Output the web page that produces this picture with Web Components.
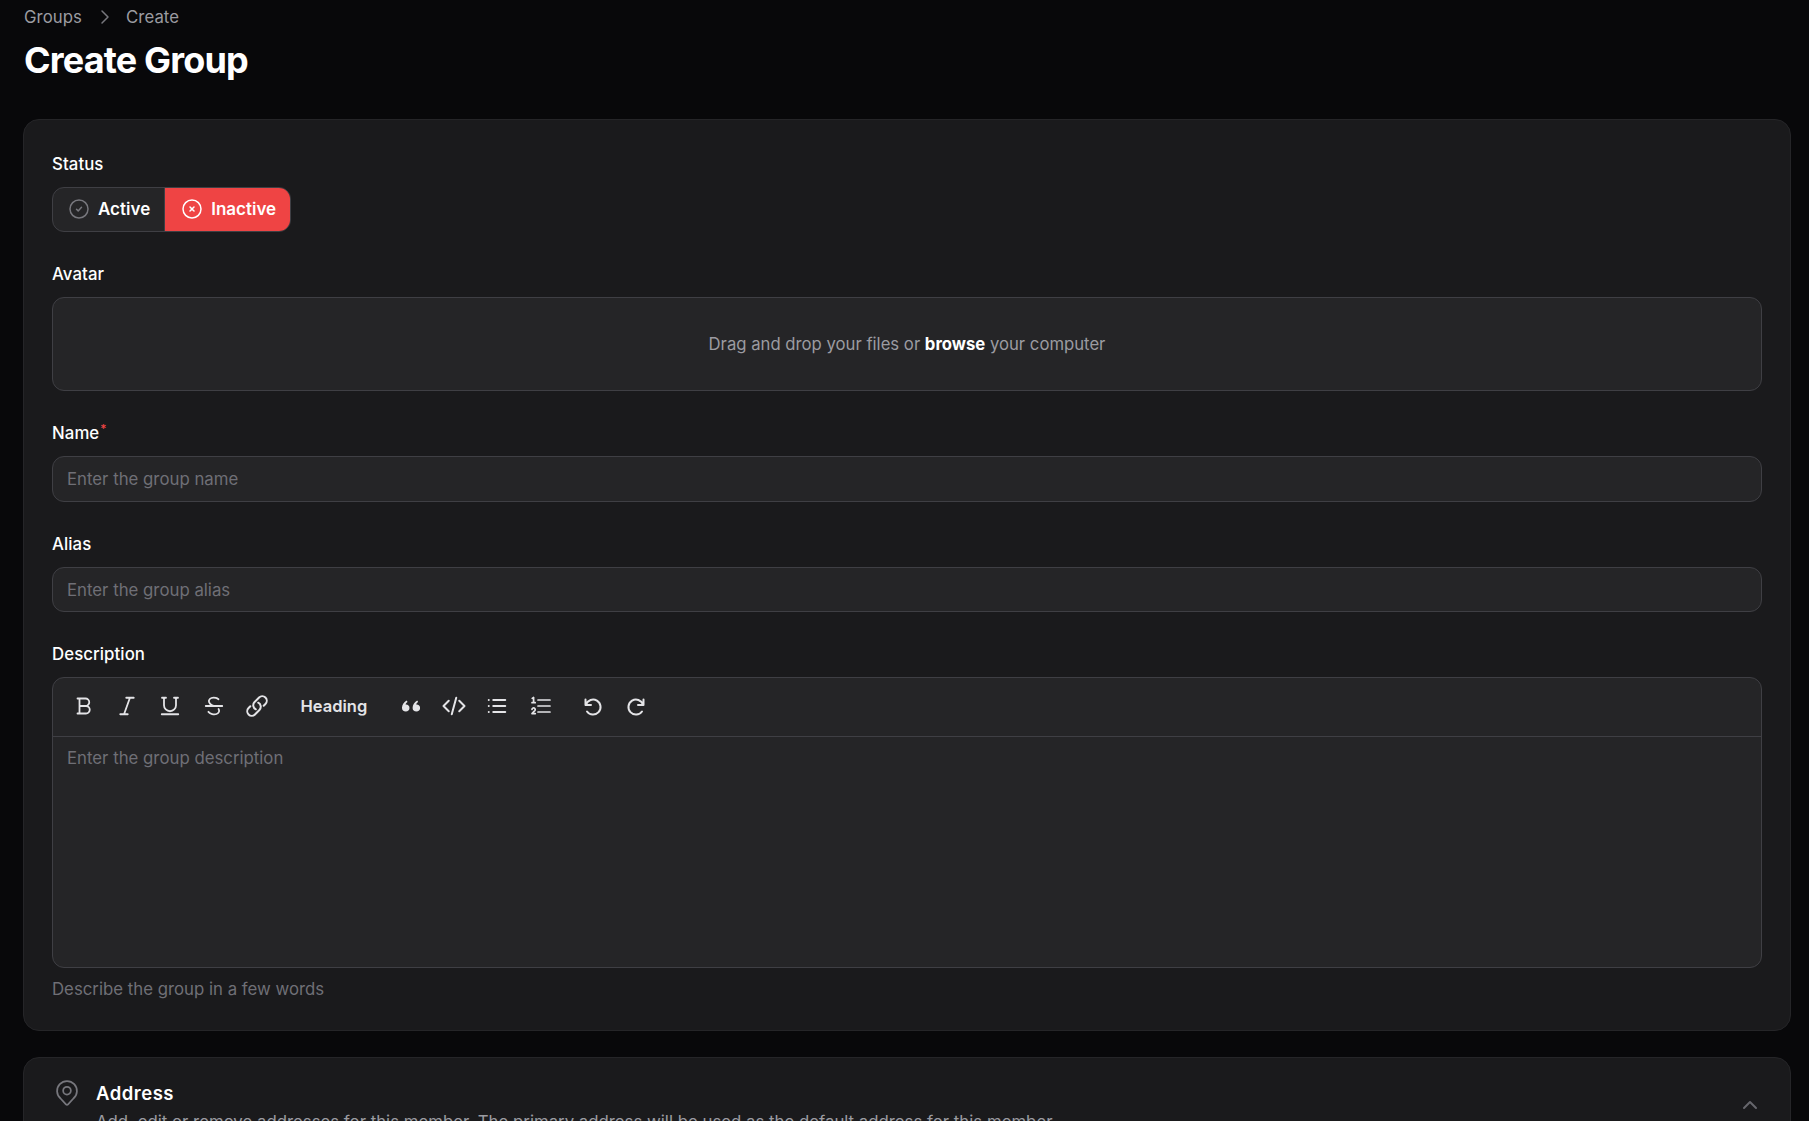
<!doctype html>
<html lang="en">
<head>
<meta charset="utf-8">
<title>Create Group</title>
<style>
  html, body { margin: 0; height: 100%; overflow: hidden; background: #08080a; }
  body { font-family: Inter, "Liberation Sans", sans-serif; color: #fff; }
  .stack { display: flex; flex-direction: column; gap: 26px; padding: 0 18px 0 23px; }
</style>
</head>
<body>
<page-header crumb="Groups" current="Create" title="Create Group"></page-header>
<div class="stack">
  <form-card>
    <form-field label="Status">
      <status-toggle></status-toggle>
    </form-field>
    <form-field label="Avatar">
      <drop-zone></drop-zone>
    </form-field>
    <form-field label="Name" required>
      <text-input placeholder="Enter the group name"></text-input>
    </form-field>
    <form-field label="Alias">
      <text-input placeholder="Enter the group alias" style="height: 45px"></text-input>
    </form-field>
    <form-field label="Description" help="Describe the group in a few words">
      <rich-editor placeholder="Enter the group description"></rich-editor>
    </form-field>
  </form-card>
  <section-card heading="Address" text="Add, edit or remove addresses for this member. The primary address will be used as the default address for this member."></section-card>
</div>

<script>
// small helper, every component has the same shadow setup
const shadow = (el, html) => {
  el.attachShadow({ mode: 'open' }).innerHTML = html;
};

const icon = (d, size = 24, width = 1.5) => /* html */ `
  <svg width="${size}" height="${size}" viewBox="0 0 24 24" fill="none" stroke="currentColor"
    stroke-width="${width}" stroke-linecap="round" stroke-linejoin="round"><path d="${d}"/></svg>`;

class PageHeader extends HTMLElement {
  connectedCallback() {
    shadow(this, /* html */ `
      <style>
        :host { display: block; padding: 7px 23px 0 24px; height: 119px; box-sizing: border-box; }
        nav { display: flex; align-items: center; height: 20px; font-size: 16.8px; letter-spacing: .05px; color: #9b9ba1; }
        svg { margin: 0 9px 0 11px; color: #77777d; }
        h1 { margin: 11px 0 0; font-size: 36px; line-height: 44px; font-weight: 700; letter-spacing: -0.83px; color: #fff; }
      </style>
      <nav><span>${this.getAttribute('crumb')}</span>${icon('M9 6l6 6l-6 6')}<span>${this.getAttribute('current')}</span></nav>
      <h1>${this.getAttribute('title')}</h1>
    `);
  }
}

class FormCard extends HTMLElement {
  connectedCallback() {
    shadow(this, /* html */ `
      <style>
        :host {
          display: flex; flex-direction: column; gap: 30px;
          box-sizing: border-box; padding: 32px 28px 29px;
          background: #1a1a1c; border: 1px solid #252528; border-radius: 16px;
        }
      </style>
      <slot></slot>
    `);
  }
}

class FormField extends HTMLElement {
  connectedCallback() {
    const help = this.getAttribute('help');
    shadow(this, /* html */ `
      <style>
        :host { display: block; }
        label { display: block; font-size: 16.8px; line-height: 24px; font-weight: 500; letter-spacing: .08px; color: #fff; margin-bottom: 11px; }
        sup { color: #ef4444; font-size: 12px; line-height: 0; vertical-align: 6px; margin-left: 1px; }
        p { margin: 9px 0 0; font-size: 16.8px; line-height: 24px; color: #6f6f76; }
      </style>
      <label>${this.getAttribute('label')}${this.hasAttribute('required') ? '<sup>*</sup>' : ''}</label>
      <slot></slot>
      ${help ? `<p>${help}</p>` : ''}
    `);
  }
}

class StatusToggle extends HTMLElement {
  connectedCallback() {
    shadow(this, /* html */ `
      <style>
        :host {
          display: inline-flex; height: 45px; box-sizing: border-box; overflow: hidden; vertical-align: top;
          border: 1px solid #3f3f44; border-radius: 12px; background: #252527;
          font-size: 17px; font-weight: 600; color: #fff;
        }
        div { display: flex; align-items: center; gap: 7px; padding: 0 14px 1px 14px; }
        .off { background: #ef4444; border-left: 1px solid #3f3f44; padding: 0 14px 1px 15px; }
        svg { display: block; }
        .on svg { color: #77777d; }
      </style>
      <div class="on">${icon('M21 12a9 9 0 1 1 -18 0a9 9 0 0 1 18 0z M9.5 12.2l1.7 1.7l3.3 -3.6')}Active</div>
      <div class="off">${icon('M21 12a9 9 0 1 1 -18 0a9 9 0 0 1 18 0z M10 10l4 4m0 -4l-4 4')}Inactive</div>
    `);
  }
}

class DropZone extends HTMLElement {
  connectedCallback() {
    shadow(this, /* html */ `
      <style>
        :host {
          display: flex; align-items: center; justify-content: center; height: 94px; box-sizing: border-box;
          background: #252527; border: 1px solid #3f3f44; border-radius: 12px;
          font-size: 16.7px; color: #9b9ba1;
        }
        b { color: #fff; font-weight: 700; }
      </style>
      <span>Drag and drop your files or <b>browse</b> your computer</span>
    `);
  }
}

class TextInput extends HTMLElement {
  connectedCallback() {
    shadow(this, /* html */ `
      <style>
        :host {
          display: flex; align-items: center; height: 46px; box-sizing: border-box; padding: 0 14px;
          background: #252527; border: 1px solid #3f3f44; border-radius: 12px;
          font-size: 16.8px; color: #6f6f76;
        }
      </style>
      <span>${this.getAttribute('placeholder')}</span>
    `);
  }
}

const ICONS = {
  bold: 'M5.5 4.5h8a3.75 3.75 0 0 1 0 7.5h-6 M7.5 4.5v15 M7.5 12h6.5a3.75 3.75 0 0 1 0 7.5h-8.5',
  italic: 'M5.248 20.246H9.05m0 0h3.696m-3.696 0 5.893-16.502m0 0h-3.697m3.697 0h3.803',
  underline: 'M17.995 3.744v7.5a6 6 0 1 1-12 0v-7.5m-2.25 16.502h16.5 M4 3.744h4 M16 3.744h4',
  strike: 'M12 12a8.912 8.912 0 0 1-.318-.079c-1.585-.424-2.904-1.247-3.76-2.236-.873-1.009-1.265-2.19-.968-3.301.59-2.2 3.663-3.29 6.863-2.432A8.186 8.186 0 0 1 16.5 5.21M6.42 17.81c.857.99 2.176 1.812 3.761 2.237 3.2.858 6.274-.23 6.863-2.431.233-.868.044-1.779-.465-2.617M3.75 12h16.5',
  link: 'M13.19 8.688a4.5 4.5 0 0 1 1.242 7.244l-4.5 4.5a4.5 4.5 0 0 1-6.364-6.364l1.757-1.757m13.35-.622 1.757-1.757a4.5 4.5 0 0 0-6.364-6.364l-4.5 4.5a4.5 4.5 0 0 0 1.242 7.244',
  quote: 'M3 14c0-3.3 1.7-6 4.6-7.6l1 1.6c-1.2.8-1.9 1.6-2 2.5h.4c2 0 3.5 1.5 3.5 3.4 0 2-1.6 3.6-3.6 3.6C4.4 17.5 3 16 3 14z M13.6 14c0-3.3 1.7-6 4.6-7.6l1 1.6c-1.2.8-1.9 1.6-2 2.5h.4c2 0 3.5 1.5 3.5 3.4 0 2-1.6 3.6-3.6 3.6-2.5 0-3.9-1.5-3.9-3.5z',
  code: 'M17.25 6.75 22.5 12l-5.25 5.25m-10.5 0L1.5 12l5.25-5.25m7.5-3-4.5 16.5',
  list: 'M8.25 6h12M8.25 12h12m-12 6h12M3.75 6h.01M3.75 12h.01M3.75 18h.01',
  ordered: 'M9 6h12 M9 12h12 M9 18h12 M3.2 4.4l1.4-.9v5.2 M3 8.7h3.2 M3 15.4a1.6 1.6 0 1 1 2.8 1.2l-2.8 3h3.3',
  undo: 'M4.5 5.5v5.5h5.5 M5 10.5A7.5 7.5 0 1 1 6 17.5',
  redo: 'M19.5 5.5v5.5h-5.5 M19 10.5A7.5 7.5 0 1 0 18 17.5',
};

class RichEditor extends HTMLElement {
  connectedCallback() {
    const btn = name => `<button class="${name}">${icon(ICONS[name], 24, 2)}</button>`;
    shadow(this, /* html */ `
      <style>
        :host {
          display: block; height: 291px; box-sizing: border-box; overflow: hidden;
          background: #252527; border: 1px solid #3f3f44; border-radius: 12px;
        }
        .bar { display: flex; align-items: center; height: 59px; box-sizing: border-box; padding: 0 9px 2px; border-bottom: 1px solid #3f3f44; color: #e4e4e7; }
        .group { display: flex; }
        button { all: unset; display: flex; align-items: center; justify-content: center; width: 43.3px; height: 36px; }
        svg { display: block; }
        .heading { width: auto; margin: 0 22px; font-size: 16.5px; font-weight: 600; color: #e4e4e7; }
        .quote svg { fill: currentColor; stroke: none; }
        .ordered path { stroke-width: 1.7; }
        .bold path, .italic path, .underline path, .strike path { stroke-width: 1.8; }
        .undo-group { margin-left: 9px; }
        .text { padding: 9px 14px; font-size: 16.8px; line-height: 24px; color: #6f6f76; }
      </style>
      <div class="bar">
        <div class="group">${['bold', 'italic', 'underline', 'strike', 'link'].map(btn).join('')}</div>
        <button class="heading">Heading</button>
        <div class="group">${['quote', 'code', 'list', 'ordered'].map(btn).join('')}</div>
        <div class="group undo-group">${btn('undo')}${btn('redo')}</div>
      </div>
      <div class="text">${this.getAttribute('placeholder')}</div>
    `);
  }
}

class SectionCard extends HTMLElement {
  connectedCallback() {
    shadow(this, /* html */ `
      <style>
        :host {
          display: block; box-sizing: border-box; height: 200px; padding: 21px 28px;
          background: #1a1a1c; border: 1px solid #252528; border-radius: 16px; position: relative;
        }
        .row { display: flex; gap: 15px; }
        .pin { color: #77777d; margin: 0 0 0 1px; flex: none; }
        .pin svg { display: block; }
        .chev { position: absolute; top: 35px; right: 28px; color: #66666c; }
        h2 { margin: 0; font-size: 18.5px; line-height: 28px; font-weight: 600; letter-spacing: .5px; color: #fff; }
        p { margin: 3px 0 0; font-size: 16.8px; line-height: 24px; color: #9b9ba1; white-space: nowrap; }
      </style>
      <div class="row">
        <div class="pin">${icon('M6.5 16.7a8.5 8.5 0 1 1 11 0l-4.6 5a1.2 1.2 0 0 1 -1.8 0z M15.3 10a3.3 3.3 0 1 1 -6.6 0a3.3 3.3 0 0 1 6.6 0z', 28)}</div>
        <div>
          <h2>${this.getAttribute('heading')}</h2>
          <p>${this.getAttribute('text')}</p>
        </div>
      </div>
      <div class="chev">${icon('M6 15l6 -6l6 6', 24, 2)}</div>
    `);
  }
}

customElements.define('page-header', PageHeader);
customElements.define('form-card', FormCard);
customElements.define('form-field', FormField);
customElements.define('status-toggle', StatusToggle);
customElements.define('drop-zone', DropZone);
customElements.define('text-input', TextInput);
customElements.define('rich-editor', RichEditor);
customElements.define('section-card', SectionCard);
</script>
</body>
</html>
